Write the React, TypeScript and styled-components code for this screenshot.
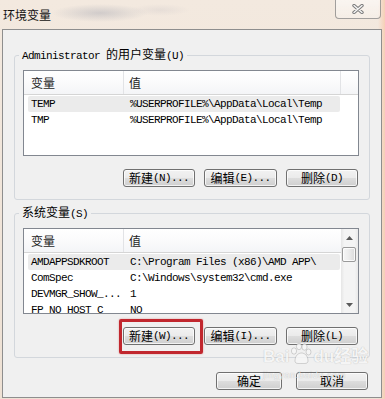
import React from "react";
import styled, { createGlobalStyle } from "styled-components";

const GlobalStyle = createGlobalStyle`
  html, body {
    margin: 0;
    padding: 0;
    background: #efe4d8;
  }
  body {
    font-family: "Noto Sans CJK SC", sans-serif;
    color: #000;
  }
`;

const Window = styled.div`
  position: relative;
  width: 385px;
  height: 399px;
  overflow: hidden;
  display: flex;
  flex-direction: column;
  background:
    linear-gradient(90deg, rgba(246, 210, 188, 0) 378px, #f6cfb6 385px),
    linear-gradient(180deg, #f3e9df 0%, #eee1d4 100%);
`;

const TitleBar = styled.div`
  height: 29px;
  flex-shrink: 0;
  display: flex;
  justify-content: space-between;
  align-items: flex-start;
  background:
    radial-gradient(ellipse 48px 9px at 100px 13px, rgba(120, 128, 150, 0.28), rgba(120, 128, 150, 0) 100%),
    radial-gradient(ellipse 30px 6px at 160px 10px, rgba(140, 140, 160, 0.12), rgba(140, 140, 160, 0) 100%);
`;

const Title = styled.div`
  padding: 8px 0 0 3px;
  font-size: 12px;
  line-height: 14px;
  color: #111;
`;

const CloseButton = styled.div`
  width: 46px;
  height: 19px;
  margin-right: 4px;
  box-sizing: border-box;
  border: 1px solid rgba(90, 90, 90, 0.55);
  border-top: none;
  border-radius: 0 0 4px 4px;
  background: linear-gradient(180deg, rgba(255, 255, 255, 0.55), rgba(255, 255, 255, 0.25));
  display: flex;
  align-items: center;
  justify-content: center;
`;

const Panel = styled.div`
  flex: 1;
  margin: 0 3px 1px 2px;
  border: 1px solid #8e8e8e;
  background: #f0f0f0;
  padding: 17px 11px 0 11px;
  display: flex;
  flex-direction: column;
`;

const Group = styled.fieldset<{ $gap?: number }>`
  margin: ${(p) => p.$gap ?? 0}px 0 0 0;
  padding: 0 10px 12px 8px;
  min-inline-size: 0;
  border: 1px solid #d3d7dc;
  border-radius: 3px;
`;

const Legend = styled.legend`
  margin-left: -4px;
  padding: 0 3px;
  line-height: 14px;
  font-size: 12px;
`;

const Han = styled.span`
  font-family: "Noto Sans CJK SC", sans-serif;
  font-size: 12px;
`;

const Latin = styled.span`
  font-family: "Liberation Mono", monospace;
  font-size: 11px;
  letter-spacing: -0.6px;
`;

const ListBox = styled.div<{ $top: number }>`
  margin-top: ${(p) => p.$top}px;
  height: 86px;
  box-sizing: border-box;
  border: 1px solid #828790;
  background: #fff;
  display: flex;
  overflow: hidden;
`;

const Columns = styled.div`
  flex: 1;
  display: flex;
  flex-direction: column;
  overflow: hidden;
`;

const Header = styled.div`
  height: 24px;
  flex-shrink: 0;
  box-sizing: border-box;
  display: flex;
  border-bottom: 1px solid #d5d5d5;
  background: linear-gradient(180deg, #ffffff 0%, #fbfbfc 45%, #f4f5f7 100%);
`;

const HeadCell = styled.div<{ $w?: number; $pad: number; $line?: boolean }>`
  ${(p) => (p.$w ? `width: ${p.$w}px; flex-shrink: 0;` : "flex: 1;")}
  box-sizing: border-box;
  padding-left: ${(p) => p.$pad}px;
  display: flex;
  align-items: center;
  border-right: ${(p) => (p.$line ? "1px solid #e2e3e6" : "none")};
  color: #1e1e1e;
`;

const Rows = styled.div`
  padding-top: 1px;
  display: flex;
  flex-direction: column;
`;

const Row = styled.div<{ $selected?: boolean }>`
  height: 16px;
  width: 312px;
  margin-left: 4px;
  flex-shrink: 0;
  display: flex;
  align-items: center;
  border-radius: 2px;
  background: ${(p) => (p.$selected ? "#ebebeb" : "transparent")};
  font-family: "Liberation Mono", monospace;
  font-size: 11px;
  letter-spacing: -0.6px;
  line-height: 16px;
  white-space: nowrap;
`;

const NameCell = styled.div`
  width: 95px;
  flex-shrink: 0;
  box-sizing: border-box;
  padding-left: 3px;
  overflow: hidden;
`;

const ValueCell = styled.div`
  flex: 1;
  padding-left: 7px;
  overflow: hidden;
`;

const ScrollBar = styled.div`
  width: 17px;
  flex-shrink: 0;
  display: flex;
  flex-direction: column;
  background: linear-gradient(90deg, #e6e6e6 0%, #f4f4f4 20%, #f4f4f4 80%, #e9e9e9 100%);
`;

const ScrollArrow = styled.div`
  height: 17px;
  flex-shrink: 0;
  display: flex;
  align-items: center;
  justify-content: center;
`;

const ScrollTrack = styled.div`
  flex: 1;
`;

const Thumb = styled.div`
  margin: 1px 2px 0 1px;
  height: 15px;
  box-sizing: border-box;
  border: 1px solid #9a9a9a;
  border-radius: 2px;
  background: linear-gradient(90deg, #f7f7f7 0%, #ececec 50%, #dadada 100%);
  box-shadow: inset 0 0 0 1px rgba(255, 255, 255, 0.8);
`;

const ButtonRow = styled.div<{ $top: number; $gap: number; $right?: number }>`
  margin-top: ${(p) => p.$top}px;
  padding-right: ${(p) => p.$right ?? 1}px;
  display: flex;
  justify-content: flex-end;
  gap: ${(p) => p.$gap}px;
`;

const Button = styled.div<{ $w: number }>`
  width: ${(p) => p.$w}px;
  height: 18px;
  box-sizing: border-box;
  border: 1px solid #707070;
  border-radius: 3px;
  background: linear-gradient(180deg, #f2f2f2 0%, #ebebeb 48%, #dddddd 52%, #cfcfcf 100%);
  box-shadow: inset 0 0 0 1px rgba(255, 255, 255, 0.75);
  display: flex;
  align-items: center;
  justify-content: center;
  line-height: 14px;
  white-space: nowrap;
`;

const Marked = styled.div`
  position: relative;

  &::after {
    content: "";
    position: absolute;
    left: -4px;
    right: -8px;
    top: -8px;
    bottom: -9px;
    border: 3px solid #c1272e;
    border-radius: 2px;
    box-shadow: 0 0 2px rgba(200, 40, 40, 0.45);
  }
`;

const Watermark = styled.div`
  position: absolute;
  left: 263px;
  top: 342px;
  display: flex;
  flex-direction: column;
  align-items: flex-start;
  opacity: 0.85;
  pointer-events: none;
`;

const MarkLine = styled.div`
  display: flex;
  align-items: flex-end;
  font-family: "Liberation Sans", "Noto Sans CJK SC", sans-serif;
  font-weight: bold;
  font-size: 17px;
  line-height: 18px;
  color: #f6f6f6;
  text-shadow: 0 0 1px rgba(0, 0, 0, 0.3);
`;

const MarkUrl = styled.div`
  margin-top: 4px;
  font-family: "Liberation Sans", sans-serif;
  font-size: 9px;
  letter-spacing: 0.6px;
  color: #f4f4f4;
  text-shadow: 0 0 1px rgba(0, 0, 0, 0.3);
`;

const CJK = /([\u3000-\u9fff\uff00-\uffef]+)/;

function Mixed({ text }: { text: string }) {
  return (
    <>
      {text
        .split(CJK)
        .filter(Boolean)
        .map((part, i) =>
          CJK.test(part) ? <Han key={i}>{part}</Han> : <Latin key={i}>{part}</Latin>
        )}
    </>
  );
}

type EnvVar = { name: string; value: string; selected?: boolean };

const userVars: EnvVar[] = [
  { name: "TEMP", value: "%USERPROFILE%\\AppData\\Local\\Temp", selected: true },
  { name: "TMP", value: "%USERPROFILE%\\AppData\\Local\\Temp" },
];

const systemVars: EnvVar[] = [
  { name: "AMDAPPSDKROOT", value: "C:\\Program Files (x86)\\AMD APP\\", selected: true },
  { name: "ComSpec", value: "C:\\Windows\\system32\\cmd.exe" },
  { name: "DEVMGR_SHOW_...", value: "1" },
  { name: "FP_NO_HOST_C", value: "NO" },
];

const CloseIcon = () => (
  <svg width="12" height="10" viewBox="0 0 12 10">
    <path d="M2 1.5 L10 8.5 M10 1.5 L2 8.5" stroke="#7b7b7b" strokeWidth="3.4" strokeLinecap="round" />
    <path d="M2 1.5 L10 8.5 M10 1.5 L2 8.5" stroke="#f7f7f7" strokeWidth="1.4" strokeLinecap="round" />
  </svg>
);

const Arrow = ({ up }: { up?: boolean }) => (
  <svg width="7" height="4" viewBox="0 0 7 4">
    <path d={up ? "M0 4 L3.5 0 L7 4 Z" : "M0 0 L7 0 L3.5 4 Z"} fill="#5a5a5a" />
  </svg>
);

const Paw = () => (
  <svg width="24" height="24" viewBox="0 0 24 24">
    <g fill="#f6f6f6" stroke="rgba(0,0,0,0.22)" strokeWidth="0.8">
      <ellipse cx="5" cy="9" rx="2.6" ry="3.2" />
      <ellipse cx="10" cy="4.5" rx="2.6" ry="3.2" />
      <ellipse cx="15.5" cy="5" rx="2.6" ry="3.2" />
      <ellipse cx="19.5" cy="10" rx="2.5" ry="3" />
      <path d="M6 19 C6 13 10 11 12.5 11 C15 11 19 13 19 19 C19 22 15 21.5 12.5 21.5 C10 21.5 6 22 6 19 Z" />
    </g>
  </svg>
);

function VarList({ vars, scroll }: { vars: EnvVar[]; scroll?: boolean }) {
  return (
    <ListBox $top={7}>
      <Columns>
        <Header>
          <HeadCell $w={100} $pad={7} $line>
            <Han>变量</Han>
          </HeadCell>
          <HeadCell $w={217} $pad={5} $line={!scroll}>
            <Han>值</Han>
          </HeadCell>
          <HeadCell $pad={0} />
        </Header>
        <Rows>
          {vars.map((v) => (
            <Row key={v.name} $selected={v.selected}>
              <NameCell>{v.name}</NameCell>
              <ValueCell>{v.value}</ValueCell>
            </Row>
          ))}
        </Rows>
      </Columns>
      {scroll && (
        <ScrollBar>
          <ScrollArrow>
            <Arrow up />
          </ScrollArrow>
          <ScrollTrack>
            <Thumb />
          </ScrollTrack>
          <ScrollArrow>
            <Arrow />
          </ScrollArrow>
        </ScrollBar>
      )}
    </ListBox>
  );
}

export default function App() {
  return (
    <>
      <GlobalStyle />
      <Window>
        <TitleBar>
          <Title>环境变量</Title>
          <CloseButton>
            <CloseIcon />
          </CloseButton>
        </TitleBar>
        <Panel>
          <Group>
            <Legend>
              <Mixed text="Administrator 的用户变量(U)" />
            </Legend>
            <VarList vars={userVars} />
            <ButtonRow $top={13} $gap={9}>
              <Button $w={72}>
                <Mixed text="新建(N)..." />
              </Button>
              <Button $w={73}>
                <Mixed text="编辑(E)..." />
              </Button>
              <Button $w={72}>
                <Mixed text="删除(D)" />
              </Button>
            </ButtonRow>
          </Group>
          <Group $gap={5}>
            <Legend>
              <Mixed text="系统变量(S)" />
            </Legend>
            <VarList vars={systemVars} scroll />
            <ButtonRow $top={13} $gap={9}>
              <Marked>
                <Button $w={72}>
                  <Mixed text="新建(W)..." />
                </Button>
              </Marked>
              <Button $w={73}>
                <Mixed text="编辑(I)..." />
              </Button>
              <Button $w={72}>
                <Mixed text="删除(L)" />
              </Button>
            </ButtonRow>
          </Group>
          <ButtonRow $top={14} $gap={14} $right={2}>
            <Button $w={66}>
              <Han>确定</Han>
            </Button>
            <Button $w={72}>
              <Han>取消</Han>
            </Button>
          </ButtonRow>
        </Panel>
        <Watermark>
          <MarkLine>
            <span>Bai</span>
            <Paw />
            <span>du</span>
            <span>经验</span>
          </MarkLine>
          <MarkUrl>jingyan.baidu.com</MarkUrl>
        </Watermark>
      </Window>
    </>
  );
}
